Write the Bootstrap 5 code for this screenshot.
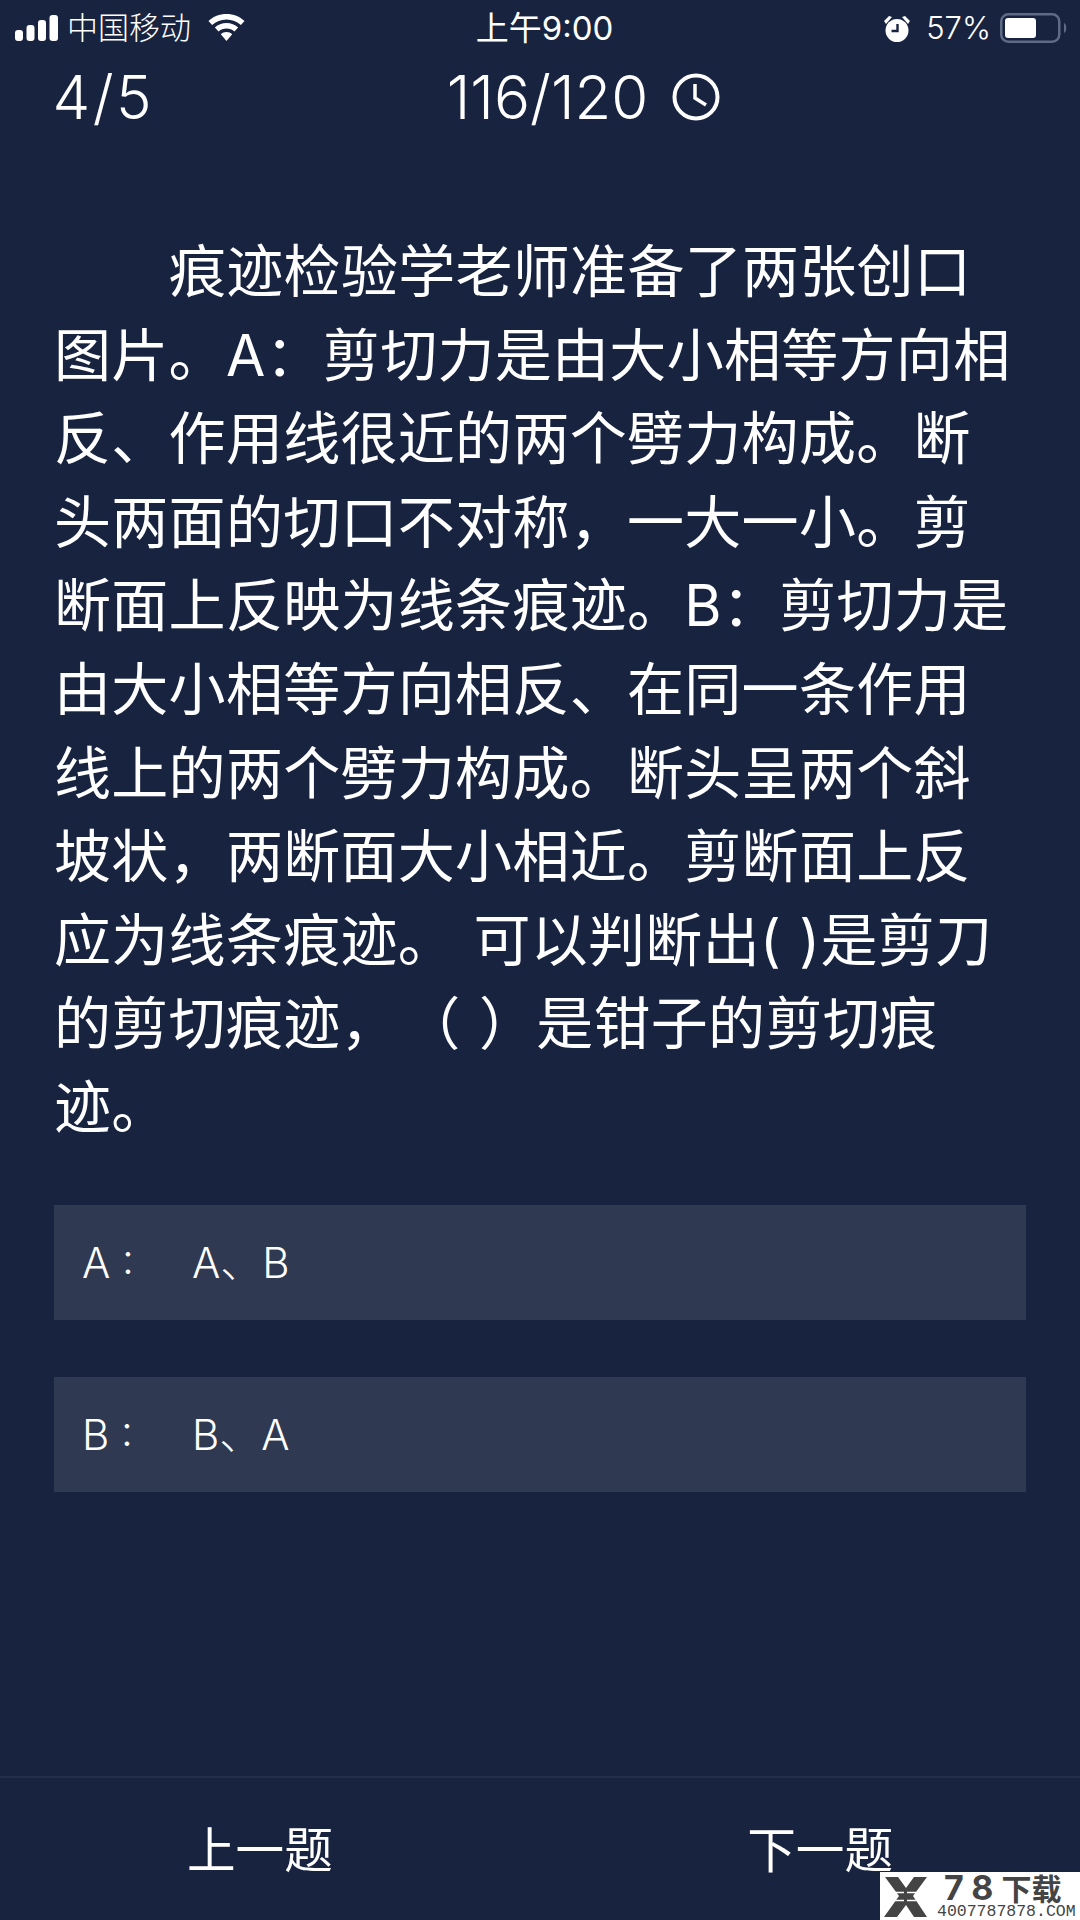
<!DOCTYPE html>
<html lang="zh-CN">
<head>
<meta charset="utf-8">
<title>犯罪大师</title>
<link href="https://cdn.jsdelivr.net/npm/bootstrap@5.3.0/dist/css/bootstrap.min.css" rel="stylesheet">
<style>
:root { --pg: #182340; }
html, body { margin: 0; background: var(--pg); }
.screen { width: 1080px; height: 1920px; background: var(--pg); color: #fff; position: relative; overflow: hidden;
  font-family: Inter, "Noto Sans CJK SC", sans-serif; font-weight: 300; }
.sbar { height: 56px; padding: 0 12px 0 15px; font-size: 31px; line-height: 56px; }
.sbar-left { width: 400px; }
.sbar-right { width: 394px; }
.carrier { margin-left: 9px; }
.wifi-i { margin-left: 17px; }
.clock-text { font-size: 33px; font-weight: 400; }
.pct { margin: 0 9px 0 15px; font-size: 31px; }
.hdr { height: 68px; margin-top: 7px; padding-left: 52.5px; font-size: 60px; line-height: 68px; }
.hdr-frac { letter-spacing: 2.5px; }
.hdr-score { margin-left: 292.5px; }
.hdr-ic { margin-left: 24px; }
.qtext { margin: 99px 0 0 54px; width: 1000px; font-size: 57px; line-height: 83.6px; letter-spacing: 0.3px; word-spacing: 2px; white-space: nowrap; font-weight: 400; text-spacing-trim: space-all; }
.qtext .first { padding-left: 115px; }
.opts { margin: 55px 54px 0 54px; gap: 57px; }
.opt { height: 115px; background: #2f3952; padding-left: 28px; font-size: 42px; line-height: 115px; }
.opt .lbl { width: 110px; }
.foot { position: absolute; left: 0; right: 0; bottom: 0; height: 144px; border-top: 2px solid #232e4b; padding: 4px 187px 0; font-size: 48.6px; line-height: .85; font-weight: 400; }
.wm { position: absolute; right: 0; bottom: 0; width: 200px; height: 48px; background: #fff; color: #444; }
.wm-logo { position: absolute; left: 3px; top: 5px; }
.wm-big { position: absolute; left: 64px; top: 2px; font-family: "Liberation Sans", "Noto Sans CJK SC", sans-serif; font-size: 30px; line-height: 28px; font-weight: 700; white-space: nowrap; }
.wm-digits { font-family: Inter, sans-serif; font-size: 34px; font-weight: 700; letter-spacing: 8px; }
.wm-small { position: absolute; left: 57px; top: 32px; font-family: "Liberation Mono", monospace; font-weight: 400; font-size: 16.5px; line-height: 15px; white-space: nowrap; letter-spacing: 0; }
</style>
</head>
<body>
<div class="screen d-flex flex-column">
  <div class="sbar d-flex align-items-center justify-content-between">
    <div class="sbar-left d-flex align-items-center">
      <svg width="43" height="26" viewBox="0 0 43 26" fill="#fff"><rect x="0" y="15" width="8" height="11" rx="3"/><rect x="11.500" y="10" width="8" height="16" rx="3"/><rect x="23" y="5" width="8" height="21" rx="3"/><rect x="34.500" y="0" width="8.500" height="26" rx="3"/></svg>
      <span class="carrier">中国移动</span>
      <svg class="wifi-i" width="37" height="28" viewBox="0 0 37 28" fill="#fff"><path d="M18.5 0C11.5 0 5.2 2.6.5 7l3.6 4C7.9 7.600 13 5.500 18.500 5.500S29.100 7.600 32.900 11l3.600-4C31.800 2.600 25.500 0 18.500 0z"/><path d="M18.500 9C14 9 9.900 10.700 6.900 13.500l3.600 4C12.600 15.600 15.400 14.500 18.500 14.500s5.900 1.100 8 3l3.600-4C27.100 10.700 23 9 18.500 9z"/><path d="M18.500 18c-2.200 0-4.200.8-5.700 2.200L18.500 27l5.700-6.800C22.700 18.800 20.700 18 18.500 18z"/></svg>
    </div>
    <div class="clock-text">上午9:00</div>
    <div class="sbar-right d-flex align-items-center justify-content-end">
      <svg width="28" height="29" viewBox="0 0 28 29"><circle cx="14" cy="16.500" r="11.500" fill="#fff"/><path d="M14.500 10v7H8.500" fill="none" stroke="#182340" stroke-width="2.400"/><path d="M1 7l5-5 3 1-6 7zM27 7l-5-5-3 1 6 7z" fill="#fff"/></svg>
      <span class="pct">57%</span>
      <svg width="68" height="30" viewBox="0 0 68 30"><rect x="1.250" y="1.250" width="58" height="27.500" rx="7" fill="none" stroke="#5f6a85" stroke-width="2.500"/><rect x="5" y="5" width="31" height="20" rx="3" fill="#fff"/><path d="M64 10c3 1 3 9 0 10z" fill="#5f6a85"/></svg>
    </div>
  </div>

  <div class="hdr d-flex align-items-center">
    <span class="hdr-frac">4/5</span>
    <span class="hdr-score">116/120</span>
    <svg class="hdr-ic" width="48" height="48" viewBox="0 0 48 48" fill="none" stroke="#fff"><circle cx="24" cy="24" r="21.500" stroke-width="4"/><path d="M23 11v14l11 7" stroke-width="3.500"/></svg>
  </div>

  <div class="qtext">
    <div class="first">痕迹检验学老师准备了两张创口</div>
    图片。A：剪切力是由大小相等方向相<br>
    反、作用线很近的两个劈力构成。断<br>
    头两面的切口不对称，一大一小。剪<br>
    断面上反映为线条痕迹。B：剪切力是<br>
    由大小相等方向相反、在同一条作用<br>
    线上的两个劈力构成。断头呈两个斜<br>
    坡状，两断面大小相近。剪断面上反<br>
    应为线条痕迹。 可以判断出( )是剪刀<br>
    的剪切痕迹，&#8202;（ ）是钳子的剪切痕<br>
    迹。
  </div>

  <div class="opts d-flex flex-column">
    <div class="opt d-flex"><span class="lbl">A :</span><span>A、B</span></div>
    <div class="opt d-flex"><span class="lbl">B :</span><span>B、A</span></div>
  </div>

  <div class="foot d-flex justify-content-between align-items-center">
    <span>上一题</span>
    <span>下一题</span>
  </div>

  <div class="wm">
    <svg class="wm-logo" width="46" height="40" viewBox="0 0 46 40"><path fill="#444" d="M2 0h13l8 11 8-11h13L30 19l14 21H31l-8-12-9 12H1l15-21z"/><path stroke="#fff" stroke-width="1.500" stroke-dasharray="9 3" d="M0 15.500H46M0 23.500H46"/></svg>
    <span class="wm-big"><span class="wm-digits">78</span>下载</span>
    <span class="wm-small">4007787878.COM</span>
  </div>
</div>
<script src="https://cdn.jsdelivr.net/npm/bootstrap@5.3.0/dist/js/bootstrap.bundle.min.js"></script>
</body>
</html>
